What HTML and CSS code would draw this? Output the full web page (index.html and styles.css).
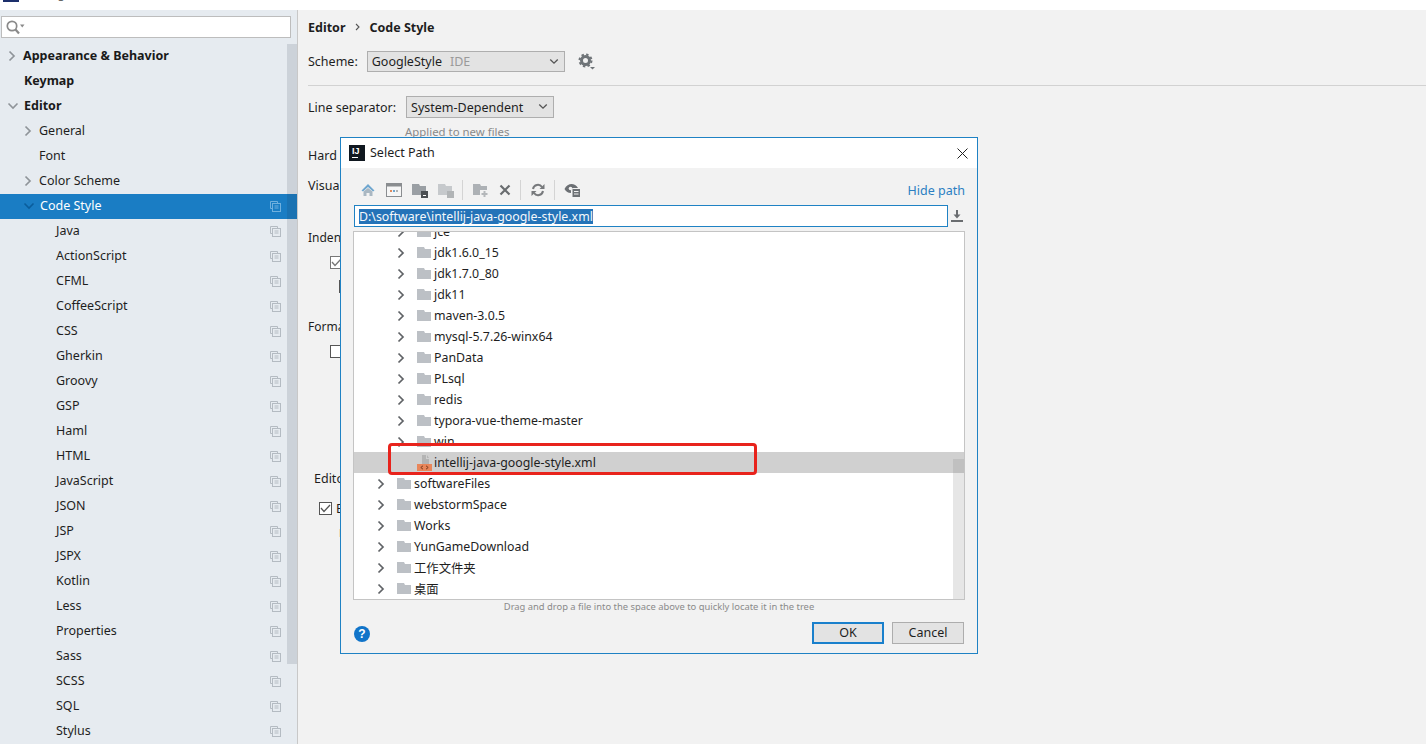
FILE: index.html
```html
<!DOCTYPE html>
<html lang="en">
<head>
<meta charset="utf-8">
<title>Settings</title>
<link rel="stylesheet" href="styles.css">
</head>
<body>
<svg class="defs" width="0" height="0" aria-hidden="true">
  <symbol id="chev-r" viewBox="0 0 8 12"><polyline points="1.5,1.5 6,6 1.5,10.5" fill="none" stroke="currentColor" stroke-width="1.7"/></symbol>
  <symbol id="chev-d" viewBox="0 0 12 8"><polyline points="1.5,1.5 6,6 10.5,1.5" fill="none" stroke="currentColor" stroke-width="1.6"/></symbol>
  <symbol id="folder" viewBox="0 0 14 11"><path d="M0 0h7l1 2h6v9H0z" fill="#bcc0c5"/></symbol>
  <symbol id="copy" viewBox="0 0 11 11"><path d="M.5.5h7v2M.5.5v7h2" fill="none" stroke="currentColor"/><rect x="2.5" y="2.5" width="8" height="8" fill="none" stroke="currentColor"/><path d="M4.5 5h4M4.5 7h4" stroke="currentColor"/></symbol>
</svg>

<header class="titlebar">
  <span class="app-logo"></span>
  <span class="app-title">Settings</span>
</header>

<div class="workspace">
  <aside class="sidebar">
    <div class="search">
      <svg class="search-icon" width="19" height="15" viewBox="0 0 19 15"><circle cx="6" cy="6" r="4.700" fill="none" stroke="#8a8a8a" stroke-width="1.700"/><path d="M9.500 9.500l3.500 4" stroke="#8a8a8a" stroke-width="2.200"/><path d="M14 4.500h4.500l-2.250 3z" fill="#8a8a8a"/></svg>
    </div>
    <nav class="nav">
      <div class="nav-row bold lv0"><svg class="nav-chev-r"><use href="#chev-r"/></svg><span class="t-app">Appearance &amp; Behavior</span></div>
      <div class="nav-row bold lv0"><span class="t-top">Keymap</span></div>
      <div class="nav-row bold lv0"><svg class="nav-chev-d"><use href="#chev-d"/></svg><span class="t-top">Editor</span></div>
      <div class="nav-row lv1"><svg class="nav-chev-r"><use href="#chev-r"/></svg><span class="t-sub">General</span></div>
      <div class="nav-row lv1"><span class="t-sub">Font</span></div>
      <div class="nav-row lv1"><svg class="nav-chev-r"><use href="#chev-r"/></svg><span class="t-sub">Color Scheme</span></div>
      <div class="nav-row lv1 selected"><svg class="nav-chev-d"><use href="#chev-d"/></svg><span class="t-sub">Code Style</span><svg class="copy"><use href="#copy"/></svg></div>
      <div class="nav-row lv2"><span>Java</span><svg class="copy"><use href="#copy"/></svg></div>
      <div class="nav-row lv2"><span>ActionScript</span><svg class="copy"><use href="#copy"/></svg></div>
      <div class="nav-row lv2"><span>CFML</span><svg class="copy"><use href="#copy"/></svg></div>
      <div class="nav-row lv2"><span>CoffeeScript</span><svg class="copy"><use href="#copy"/></svg></div>
      <div class="nav-row lv2"><span>CSS</span><svg class="copy"><use href="#copy"/></svg></div>
      <div class="nav-row lv2"><span>Gherkin</span><svg class="copy"><use href="#copy"/></svg></div>
      <div class="nav-row lv2"><span>Groovy</span><svg class="copy"><use href="#copy"/></svg></div>
      <div class="nav-row lv2"><span>GSP</span><svg class="copy"><use href="#copy"/></svg></div>
      <div class="nav-row lv2"><span>Haml</span><svg class="copy"><use href="#copy"/></svg></div>
      <div class="nav-row lv2"><span>HTML</span><svg class="copy"><use href="#copy"/></svg></div>
      <div class="nav-row lv2"><span>JavaScript</span><svg class="copy"><use href="#copy"/></svg></div>
      <div class="nav-row lv2"><span>JSON</span><svg class="copy"><use href="#copy"/></svg></div>
      <div class="nav-row lv2"><span>JSP</span><svg class="copy"><use href="#copy"/></svg></div>
      <div class="nav-row lv2"><span>JSPX</span><svg class="copy"><use href="#copy"/></svg></div>
      <div class="nav-row lv2"><span>Kotlin</span><svg class="copy"><use href="#copy"/></svg></div>
      <div class="nav-row lv2"><span>Less</span><svg class="copy"><use href="#copy"/></svg></div>
      <div class="nav-row lv2"><span>Properties</span><svg class="copy"><use href="#copy"/></svg></div>
      <div class="nav-row lv2"><span>Sass</span><svg class="copy"><use href="#copy"/></svg></div>
      <div class="nav-row lv2"><span>SCSS</span><svg class="copy"><use href="#copy"/></svg></div>
      <div class="nav-row lv2"><span>SQL</span><svg class="copy"><use href="#copy"/></svg></div>
      <div class="nav-row lv2"><span>Stylus</span><svg class="copy"><use href="#copy"/></svg></div>
    </nav>
    <div class="nav-scroll"></div>
  </aside>

  <main class="main">
    <div class="crumb"><b>Editor</b><svg class="crumb-sep" width="5" height="8" viewBox="0 0 5 8"><polyline points="1,1 4,4 1,7" fill="none" stroke="#555" stroke-width="1.100"/></svg><b>Code Style</b></div>
    <div class="scheme-row">
      <span>Scheme:</span>
      <div class="select scheme-select"><span>GoogleStyle</span><span class="muted">IDE</span><svg class="sel-chev"><use href="#chev-d"/></svg></div>
      <svg class="gear" width="18" height="18" viewBox="0 0 18 18"><circle cx="7.500" cy="7.500" r="4" fill="none" stroke="#6f7478" stroke-width="3"/><circle cx="7.500" cy="7.500" r="6" fill="none" stroke="#6f7478" stroke-width="2" stroke-dasharray="2.400 2.300"/><path d="M12 14h5l-2.500 2.500z" fill="#6f7478"/></svg>
    </div>
    <hr class="rule">
    <div class="line-row">
      <span>Line separator:</span>
      <div class="select line-select"><span>System-Dependent</span><svg class="sel-chev"><use href="#chev-d"/></svg></div>
    </div>
    <div class="hint">Applied to new files</div>
    <div class="setting s-hard">Hard wrap at:</div>
    <div class="setting s-visual">Visual guides:</div>
    <div class="setting s-indent">Indents Detection</div>
    <div class="check-row c-indent"><span class="checkbox gray"><svg width="11" height="9" viewBox="0 0 11 9"><polyline points="1,4 4,7.500 10,1" fill="none" stroke="#777" stroke-width="1.300"/></svg></span></div>
    <div class="check-row c-indent2"><span class="checkbox"></span></div>
    <div class="setting s-format">Formatter Control</div>
    <div class="check-row c-format"><span class="checkbox"></span></div>
    <div class="setting s-editor">EditorConfig</div>
    <div class="check-row c-editor"><span class="checkbox"><svg width="11" height="9" viewBox="0 0 11 9"><polyline points="1,4 4,7.500 10,1" fill="none" stroke="#555" stroke-width="1.300"/></svg></span><span>Enable EditorConfig support</span></div>
    <div class="check-row c-editor2"><span class="stub">E</span></div>
  </main>
</div>

<section class="dialog">
  <div class="dlg-title">
    <span class="ij-logo"><span class="ij-text">IJ</span><span class="ij-bar"></span></span>
    <span class="dlg-name">Select Path</span>
    <svg class="dlg-close" width="11" height="11" viewBox="0 0 11 11"><path d="M.5.500l10 10M10.500.500l-10 10" stroke="#222" stroke-width="1"/></svg>
  </div>
  <div class="dlg-body">
    <div class="toolbar">
      <svg class="tb" width="16" height="16" viewBox="0 0 16 16"><path d="M8 2L1.500 8.500 3 9.500 8 5l5 4.500 1.500-1z" fill="#6ea6cf"/><path d="M3.500 9.500L8 6l4.500 3.500V14H9.500v-3h-3v3h-3z" fill="#a9b7c2"/></svg>
      <svg class="tb tb-a" width="16" height="14" viewBox="0 0 16 14"><rect x=".5" y=".5" width="15" height="13" fill="#f6f6f6" stroke="#8a8d90"/><rect x="1" y="1" width="14" height="2.500" fill="#8a8d90"/><path d="M4 7h2v2H4z" fill="#e08a5c"/><path d="M7 7h2v2H7z" fill="#6ea6cf"/><path d="M10 7h2v2h-2z" fill="#b3b3b3"/></svg>
      <svg class="tb tb-b" width="16" height="15" viewBox="0 0 16 15"><path d="M0 1h7l1 2h6v9H0z" fill="#9a9fa4"/><rect x="9" y="8" width="7" height="7" fill="#4b4f53"/><rect x="11" y="12" width="3" height="1" fill="#fff"/></svg>
      <svg class="tb tb-b" width="16" height="15" viewBox="0 0 16 15"><path d="M0 1h7l1 2h6v9H0z" fill="#c6c9cc"/><rect x="9" y="8" width="7" height="7" fill="#b1b4b6"/></svg>
      <span class="tb-sep"></span>
      <svg class="tb tb-c" width="16" height="15" viewBox="0 0 16 15"><path d="M0 1h7l1 2h6v9H0z" fill="#adb1b5"/><rect x="7" y="7" width="9" height="8" fill="#f2f2f2"/><path d="M11.500 8v6M8.500 11h6" stroke="#b4b7ba" stroke-width="2"/></svg>
      <svg class="tb tb-d" width="12" height="12" viewBox="0 0 12 12"><path d="M1.500 1.500l9 9M10.500 1.500l-9 9" stroke="#6a6d70" stroke-width="2.200"/></svg>
      <span class="tb-sep sep2"></span>
      <svg class="tb tb-e" width="14" height="14" viewBox="0 0 14 14"><path d="M2 6a5 5 0 0 1 9-2" fill="none" stroke="#77797c" stroke-width="2"/><path d="M12 8a5 5 0 0 1-9 2" fill="none" stroke="#77797c" stroke-width="2"/><path d="M13.500 1v5h-5zM.5 13V8h5z" fill="#77797c"/></svg>
      <span class="tb-sep sep3"></span>
      <svg class="tb tb-f" width="16" height="14" viewBox="0 0 16 14"><path d="M.5 6C2 2.500 5 1 7.500 1S12.500 2.500 14 5H9.500C7.500 5 7 6.500 7 8v2C4 10 2 8.500.5 6z" fill="#6c7074"/><circle cx="6.500" cy="5.500" r="1.800" fill="#f2f2f2"/><rect x="8.500" y="6" width="7.500" height="8" fill="#6c7074"/><path d="M10 8.500h4.500M10 11h4.500" stroke="#f2f2f2"/></svg>
      <a class="hide-path">Hide path</a>
    </div>
    <div class="path-row">
      <div class="path-input"><span class="path-sel">D:\software\intellij-java-google-style.xml</span></div>
      <svg class="download" width="12" height="12" viewBox="0 0 12 12"><path d="M6 0v6" stroke="#6a6d70" stroke-width="2"/><path d="M2.500 4.500h7L6 8.500z" fill="#6a6d70"/><rect y="10" width="12" height="2" fill="#6a6d70"/></svg>
    </div>
    <div class="tree">
      <div class="tree-inner">
        <div class="row i2"><svg class="r-chev"><use href="#chev-r"/></svg><svg class="r-folder"><use href="#folder"/></svg><span>jce</span></div>
        <div class="row i2"><svg class="r-chev"><use href="#chev-r"/></svg><svg class="r-folder"><use href="#folder"/></svg><span>jdk1.6.0_15</span></div>
        <div class="row i2"><svg class="r-chev"><use href="#chev-r"/></svg><svg class="r-folder"><use href="#folder"/></svg><span>jdk1.7.0_80</span></div>
        <div class="row i2"><svg class="r-chev"><use href="#chev-r"/></svg><svg class="r-folder"><use href="#folder"/></svg><span>jdk11</span></div>
        <div class="row i2"><svg class="r-chev"><use href="#chev-r"/></svg><svg class="r-folder"><use href="#folder"/></svg><span>maven-3.0.5</span></div>
        <div class="row i2"><svg class="r-chev"><use href="#chev-r"/></svg><svg class="r-folder"><use href="#folder"/></svg><span>mysql-5.7.26-winx64</span></div>
        <div class="row i2"><svg class="r-chev"><use href="#chev-r"/></svg><svg class="r-folder"><use href="#folder"/></svg><span>PanData</span></div>
        <div class="row i2"><svg class="r-chev"><use href="#chev-r"/></svg><svg class="r-folder"><use href="#folder"/></svg><span>PLsql</span></div>
        <div class="row i2"><svg class="r-chev"><use href="#chev-r"/></svg><svg class="r-folder"><use href="#folder"/></svg><span>redis</span></div>
        <div class="row i2"><svg class="r-chev"><use href="#chev-r"/></svg><svg class="r-folder"><use href="#folder"/></svg><span>typora-vue-theme-master</span></div>
        <div class="row i2"><svg class="r-chev"><use href="#chev-r"/></svg><svg class="r-folder"><use href="#folder"/></svg><span>win</span></div>
        <div class="row i2 current"><span class="r-chev"></span>
          <svg class="r-file" width="16" height="17" viewBox="0 0 16 17"><path d="M5 0h4v4h3v5H5zM10 0l2 3h-2z" fill="#b4b4b4"/><rect y="9" width="15" height="7" fill="#e9865a"/><path d="M6 10.800L3.800 12.500 6 14.200M9 10.800l2.200 1.700L9 14.200" fill="none" stroke="#7a3d20"/></svg>
          <span>intellij-java-google-style.xml</span></div>
        <div class="row i1"><svg class="r-chev"><use href="#chev-r"/></svg><svg class="r-folder"><use href="#folder"/></svg><span>softwareFiles</span></div>
        <div class="row i1"><svg class="r-chev"><use href="#chev-r"/></svg><svg class="r-folder"><use href="#folder"/></svg><span>webstormSpace</span></div>
        <div class="row i1"><svg class="r-chev"><use href="#chev-r"/></svg><svg class="r-folder"><use href="#folder"/></svg><span>Works</span></div>
        <div class="row i1"><svg class="r-chev"><use href="#chev-r"/></svg><svg class="r-folder"><use href="#folder"/></svg><span>YunGameDownload</span></div>
        <div class="row i1"><svg class="r-chev"><use href="#chev-r"/></svg><svg class="r-folder"><use href="#folder"/></svg><span>工作文件夹</span></div>
        <div class="row i1"><svg class="r-chev"><use href="#chev-r"/></svg><svg class="r-folder"><use href="#folder"/></svg><span>桌面</span></div>
      </div>
      <div class="tree-track"><div class="tree-thumb"></div></div>
      <div class="redbox"></div>
    </div>
    <div class="drag-hint">Drag and drop a file into the space above to quickly locate it in the tree</div>
    <div class="dlg-foot">
      <span class="help">?</span>
      <button class="btn primary">OK</button>
      <button class="btn">Cancel</button>
    </div>
  </div>
</section>
</body>
</html>
```
FILE: styles.css
```css
* { box-sizing: border-box; }
html, body { margin: 0; height: 744px; overflow: hidden; }
body {
  font-family: "Noto Sans", "Noto Sans CJK SC", sans-serif;
  font-size: 12.500px;
  color: #1e1e1e;
  background: #f2f2f2;
  position: relative;
}
.defs { position: absolute; }

.titlebar { height: 10px; background: #fff; overflow: hidden; display: flex; }
.app-logo { width: 16px; height: 2px; margin-left: 3px; background: #1c2f6b; }
.app-title { margin: -15px 0 0 6px; font-size: 12px; line-height: 17px; color: #666; }

.workspace { display: flex; height: 734px; }

.sidebar {
  width: 298px;
  flex: none;
  background: #e6ebf0;
  border-right: 1px solid #c8c8c8;
  position: relative;
  overflow: hidden;
}
.search {
  margin: 6px 0 0 1px;
  width: 290px;
  height: 22px;
  background: #fff;
  border: 1px solid #bdbdbd;
  display: flex;
  align-items: center;
  padding-left: 4px;
}
.nav { margin-top: 6px; }
.nav-row { height: 25px; padding-bottom: 2px; display: flex; align-items: center; position: relative; white-space: nowrap; }
.nav-row.bold { font-weight: 700; color: #1a1a1a; }
.nav-row svg { color: #8f9499; }
.nav-chev-r { position: absolute; width: 8px; height: 12px; top: 6px; }
.nav-chev-d { position: absolute; width: 12px; height: 8px; top: 8px; }
.lv0 .nav-chev-r { left: 8px; }
.lv0 .nav-chev-d { left: 7px; }
.lv1 .nav-chev-r { left: 24px; }
.lv1 .nav-chev-d { left: 23px; }
.t-app { margin-left: 23px; }
.t-top { margin-left: 24px; }
.t-sub { margin-left: 39px; }
.lv2 > span { margin-left: 56px; }
.copy { position: absolute; left: 270px; top: 7px; width: 11px; height: 11px; color: #b4bbc2 !important; }
.nav-row.selected { background: #1a7dc4; color: #fff; }
.nav-row.selected .nav-chev-d { color: #0a5d9c; }
.nav-row.selected .t-sub { margin-left: 40px; }
.nav-row.selected .copy { color: #6fb0de !important; }
.nav-scroll {
  position: absolute;
  right: 0;
  top: 34px;
  width: 10px;
  height: 620px;
  background: rgba(30, 50, 60, .13);
}

.main { flex: 1; min-width: 0; padding: 7px 0 0 10px; white-space: nowrap; }
.crumb { height: 20px; display: flex; align-items: center; font-size: 12.500px; }
.crumb b { font-weight: 700; }
.crumb-sep { margin: 0 9px 0 10px; }
.scheme-row { margin-top: 14px; height: 21px; display: flex; align-items: center; }
.select {
  height: 21px;
  background: #e3e3e3;
  border: 1px solid #aeaeae;
  display: flex;
  align-items: center;
  padding-left: 4px;
  position: relative;
}
.scheme-select { width: 198px; margin-left: 9px; }
.muted { color: #9a9a9a; margin-left: 8px; }
.sel-chev { position: absolute; right: 5px; top: 6px; width: 10px; height: 7px; color: #555; }
.gear { margin-left: 13px; margin-top: 1px; }
.rule { margin: 13px 0 0; border: 0; border-top: 1px solid #d2d2d2; }
.line-row { margin-top: 10px; height: 22px; display: flex; align-items: center; }
.line-select { width: 148px; height: 22px; margin-left: 10px; }
.hint { margin: 6px 0 0 97px; line-height: 16px; color: #8a8a8a; font-size: 11.400px; }
.setting { line-height: 18px; }
.s-hard { margin-top: 7px; }
.s-visual { margin-top: 12px; }
.s-indent { margin-top: 34px; font-size: 12px; }
.check-row { display: flex; align-items: center; gap: 4px; height: 14px; }
.checkbox { width: 13px; height: 13px; flex: none; background: #fff; border: 1px solid #555; display: flex; align-items: center; justify-content: center; }
.checkbox.gray { border-color: #777; }
.c-indent { margin: 8px 0 0 22px; }
.c-indent2 { margin: 10px 0 0 31px; }
.s-format { margin-top: 25px; font-size: 12px; }
.c-format { margin: 8px 0 0 22px; }
.s-editor { margin: 112px 0 0 6px; }
.c-editor { margin: 13px 0 0 11px; }
.c-editor2 { margin: 10px 0 0 31px; }
.stub { font-size: 11px; }

.dialog {
  position: absolute;
  left: 340px;
  top: 137px;
  width: 638px;
  height: 517px;
  border: 1px solid #1f82c4;
  background: #f2f2f2;
  display: flex;
  flex-direction: column;
}
.dlg-title { height: 30px; flex: none; background: #fff; display: flex; align-items: center; padding-left: 8px; }
.ij-logo { width: 16px; height: 16px; background: #101820; position: relative; display: block; }
.ij-text { position: absolute; left: 3px; top: 1px; color: #fff; font: 700 9px/10px "Liberation Sans", sans-serif; }
.ij-bar { position: absolute; left: 3px; top: 12px; width: 6px; height: 1px; background: #fff; }
.dlg-name { margin-left: 5px; padding-bottom: 2px; }
.dlg-close { margin-left: auto; margin-right: 9px; }
.dlg-body { flex: 1; display: flex; flex-direction: column; padding: 0 12px 0 12px; min-height: 0; }

.toolbar { height: 37px; flex: none; display: flex; align-items: center; padding: 7px 0 0 7px; }
.tb { flex: none; }
.tb-a { margin-left: 10px; }
.tb-b { margin-left: 10px; }
.tb-c { margin-left: 10px; }
.tb-d { margin-left: 10px; }
.tb-e { margin-left: 10px; }
.tb-f { margin-left: 9px; }
.tb-sep { width: 1px; height: 20px; background: #d4d4d4; margin-left: 8px; flex: none; }
.sep2 { margin-left: 9px; }
.sep3 { margin-left: 9px; }
.hide-path { margin-left: auto; color: #2b7fc2; }

.path-row { height: 22px; flex: none; display: flex; align-items: center; }
.path-input { width: 594px; margin-left: 1px; height: 22px; background: #fff; border: 1px solid #1f82c4; display: flex; align-items: center; padding-left: 4px; }
.path-sel { background: #2473b8; color: #f4f8fb; line-height: 15px; font-size: 12.350px; }
.download { margin-left: 3px; }

.tree { margin-top: 4px; height: 369px; flex: none; background: #fff; border: 1px solid #c4c4c4; position: relative; overflow: hidden; font-size: 12.350px; }
.tree-inner { margin-top: -11px; }
.row { height: 21px; display: flex; align-items: center; white-space: nowrap; }
.i1 { padding-left: 23px; }
.i2 { padding-left: 43px; }
.r-chev { width: 8px; height: 12px; flex: none; color: #5f6266; display: block; }
.r-folder { width: 14px; height: 11px; flex: none; margin-left: 12px; }
.row > span:last-child { margin-left: 3px; }
.r-file { flex: none; margin: 0 0 -2px 12px; }
.row.current { background: #d0d0d0; }
.row.current > span:last-child { margin-left: 1px; }
.tree-track { position: absolute; right: 0; top: 227px; bottom: 0; width: 11px; background: #e6e6e6; }
.tree-thumb { height: 14px; background: #c0c0c0; }
.redbox { position: absolute; left: 34px; top: 211px; width: 369px; height: 32px; border: 3px solid #e8231c; border-radius: 4px; }

.drag-hint { height: 14px; flex: none; text-align: center; font-size: 9.400px; line-height: 14px; color: #8a8a8a; }
.dlg-foot { flex: 1; display: flex; align-items: flex-start; padding: 8px 1px 0 1px; gap: 8px; }
.help { width: 16px; height: 16px; margin: 4px auto 0 0; border-radius: 50%; background: #1174c9; color: #fff; font: 700 12px/16px "Liberation Sans", sans-serif; text-align: center; }
.btn { width: 72px; height: 22px; padding: 0 0 2px; background: #e3e3e3; border: 1px solid #adadad; font: inherit; color: #1e1e1e; }
.btn.primary { border: 2px solid #1a80cc; }
```
